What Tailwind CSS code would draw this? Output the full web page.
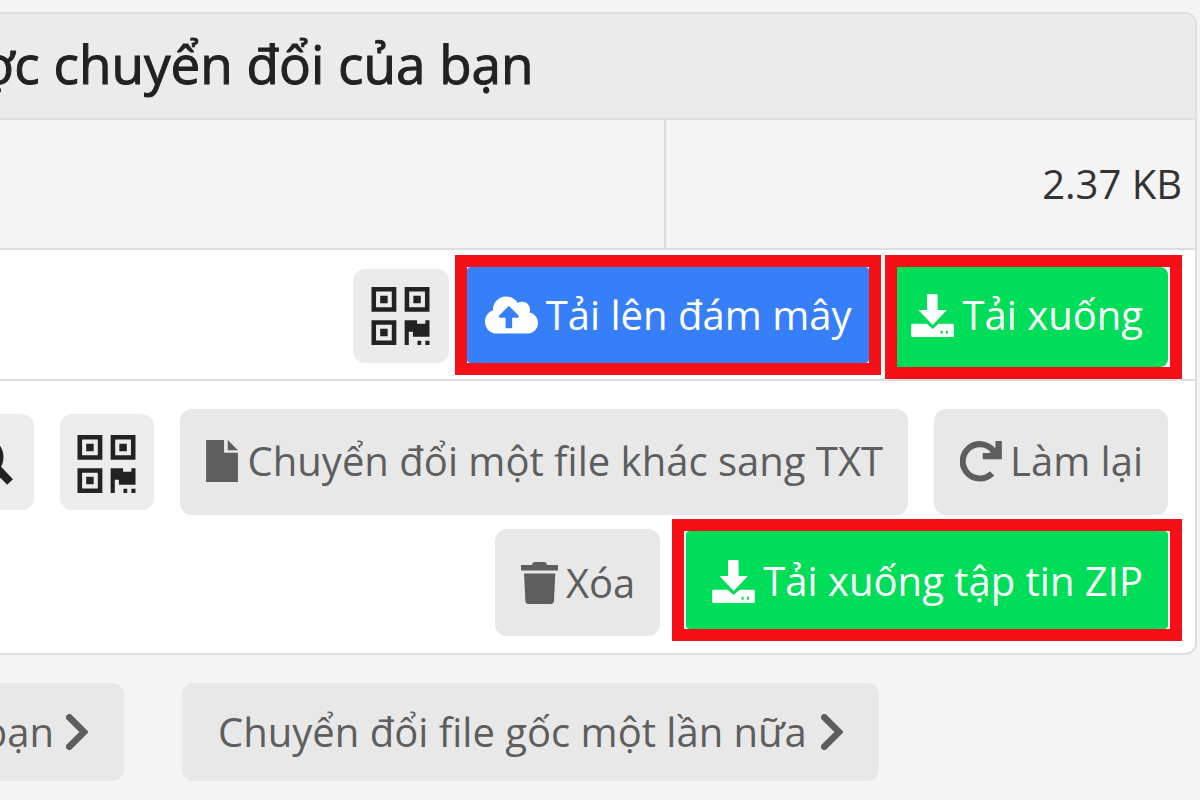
<!DOCTYPE html>
<html lang="vi">
<head>
    <meta charset="UTF-8">
    <meta name="viewport" content="width=device-width, initial-scale=1.0">
    <title>File được chuyển đổi của bạn</title>
    <script src="https://cdn.jsdelivr.net/npm/@tailwindcss/browser@4"></script>
    <style>
        body {
            font-family: 'Open Sans', 'Noto Sans', sans-serif;
        }
    </style>
</head>
<body class="bg-[#f4f4f4] text-[40px] leading-[56px] overflow-x-hidden">
    <!-- Shared icons -->
    <svg class="hidden">
        <symbol id="qr" viewBox="0 0 14 14">
            <path fill-rule="evenodd" d="M0 0h6v6H0zM1.1 1.1v3.8h3.8V1.1zM2.1 2.1h1.8v1.8H2.1zM8 0h6v6H8zM9.1 1.1v3.8h3.8V1.1zM10.1 2.1h1.8v1.8h-1.8zM0 8h6v6H0zM1.1 9.1v3.8h3.8V9.1zM2.1 10.1h1.8v1.8H2.1z"/>
            <path d="M8 8h3v.9h2V8h1v4h-4v-1.2H9V14H8zM11.1 13h.9v1h-.9zM13 13h1v1h-1z"/>
        </symbol>
        <symbol id="download" viewBox="0 0 129 130">
            <path d="M52 0h24q4 0 4 4v44h28L65 94 22 48h26V4q0-4 4-4z"/>
            <path fill-rule="evenodd" d="M4 90h43l18 16 18-16h42q4 0 4 4v32q0 4-4 4H4q-4 0-4-4V94q0-4 4-4zM89 111v9h6v-9zM105 111v9h6v-9z"/>
        </symbol>
        <symbol id="chevron" viewBox="0 0 66 108">
            <path d="M10 10l44 44-44 44" fill="none" stroke="currentColor" stroke-width="20" stroke-linecap="round"/>
        </symbol>
    </svg>

    <!-- Converted files -->
    <main class="mt-3 mr-[3px] -ml-6 bg-white border-2 border-[#dedede] rounded-xl overflow-hidden">
        <table class="w-full">
            <thead>
                <tr class="bg-[#ebebeb] border-b-2 border-[#dedede]">
                    <th colspan="2" class="h-[105px] p-0 pb-1 pl-1 text-left text-[53px] font-normal [-webkit-text-stroke:1px_#222] text-[#222]">ợc chuyển đổi của bạn</th>
                </tr>
            </thead>
            <tbody>
                <tr class="bg-[#f4f4f4] border-b-2 border-[#dedede]">
                    <td></td>
                    <td class="w-[530px] h-[130px] border-l-2 border-[#dedede] pr-[13px] text-right text-[#333]">2.37 KB</td>
                </tr>
                <tr class="border-b-2 border-[#dedede]">
                    <td colspan="2" class="h-[131px] p-0 pt-[5px] pr-[13px] align-top">
                        <div class="flex justify-end items-start gap-1">
                            <button aria-label="Mã QR" class="flex items-center justify-center mt-[14px] mr-[2px] w-24 h-[94px] rounded-xl bg-[#ebebeb] text-[#222]">
                                <svg class="w-[59px] h-[58px] fill-current"><use href="#qr"/></svg>
                            </button>
                            <div class="border-12 border-[#f51017]">
                                <button class="flex items-center gap-2 h-24 px-[18px] rounded bg-[#377ff8] text-white">
                                    <svg class="w-[53px] h-[38px]" viewBox="0 32 640 448" fill="currentColor">
                                        <path d="M537.6 226.6c4.1-10.7 6.4-22.4 6.4-34.6 0-53-43-96-96-96-19.7 0-38.1 6-53.3 16.2C367 64.2 315.3 32 256 32c-88.4 0-160 71.6-160 160 0 2.7.1 5.4.2 8.1C40.2 219.8 0 273.2 0 336c0 79.5 64.5 144 144 144h368c70.7 0 128-57.3 128-128 0-61.9-44-113.6-102.4-125.4zM393.4 288H328v112c0 8.8-7.2 16-16 16h-48c-8.8 0-16-7.2-16-16V288h-65.4c-14.3 0-21.4-17.2-11.3-27.4l105.4-105.4c6.2-6.2 16.4-6.2 22.6 0l105.4 105.4c10.1 10.1 2.9 27.4-11.3 27.4z"/>
                                    </svg>
                                    Tải lên đám mây
                                </button>
                            </div>
                            <div class="border-12 border-[#f51017] pr-[2px]">
                                <button class="flex items-center gap-2 h-[100px] pb-1 pl-[14px] pr-[25px] rounded-r-lg bg-[#00dd59] text-white">
                                    <svg class="w-[43px] h-[43px] fill-current"><use href="#download"/></svg>
                                    Tải xuống
                                </button>
                            </div>
                        </div>
                    </td>
                </tr>
            </tbody>
            <tfoot>
                <tr>
                    <td colspan="2" class="p-0 pt-7 pb-3 pr-[13px]">
                        <div class="flex justify-end items-center gap-[26px] pr-[14px]">
                            <button aria-label="Xem" class="flex shrink-0 items-center justify-center w-[94px] h-24 rounded-xl bg-[#ececec] text-[#222]">
                                <svg class="w-[52px] h-[48px]" viewBox="0 0 52 48" fill="none" stroke="currentColor">
                                    <circle cx="23" cy="19" r="16" stroke-width="7"/>
                                    <path d="M35 29l14 15" stroke-width="8"/>
                                </svg>
                            </button>
                            <button aria-label="Mã QR" class="flex shrink-0 items-center justify-center w-[94px] h-24 pt-1 rounded-xl bg-[#ececec] text-[#222]">
                                <svg class="w-[59px] h-[58px] fill-current"><use href="#qr"/></svg>
                            </button>
                            <button class="flex shrink-0 items-center gap-[10px] h-[106px] pb-[2px] pl-[26px] pr-[25px] rounded-xl bg-[#e8e8e8] text-[#5e5e5e]">
                                <svg class="w-8 h-[42px]" viewBox="0 0 94 124" fill="currentColor">
                                    <path d="M0 0h53v38h41v86H0zM64 0l30 30H64z"/>
                                </svg>
                                Chuyển đổi một file khác sang TXT
                            </button>
                            <button class="flex shrink-0 items-center gap-2 h-[106px] pb-[2px] pl-[26px] pr-[25px] rounded-xl bg-[#e8e8e8] text-[#5e5e5e]">
                                <svg class="w-[42px] h-[41px]" viewBox="0 0 124 122" fill="currentColor">
                                    <path d="M95 96A51 51 0 1 1 98 28" fill="none" stroke="currentColor" stroke-width="18"/>
                                    <path d="M105 0h19v54H67V36h20l18-17z"/>
                                </svg>
                                Làm lại
                            </button>
                        </div>
                        <div class="flex justify-end items-end gap-3 mt-1">
                            <button class="flex items-center gap-2 h-[107px] mb-[5px] pl-[26px] pr-[25px] rounded-xl bg-[#e8e8e8] text-[#5e5e5e]">
                                <svg class="w-[37px] h-[42px]" viewBox="0 0 110 125" fill="currentColor">
                                    <path d="M33 9q0-9 9-9h26q9 0 9 9h33v16H0V9zM9 34h93l-4 83q-1 8-9 8H22q-8 0-9-8z"/>
                                </svg>
                                Xóa
                            </button>
                            <div class="border-12 border-[#f51017] px-[2px]">
                                <button class="flex items-center gap-2 h-[98px] pt-[2px] pl-[26px] pr-[25px] rounded bg-[#00dd59] text-white">
                                    <svg class="w-[43px] h-[43px] fill-current"><use href="#download"/></svg>
                                    Tải xuống tập tin ZIP
                                </button>
                            </div>
                        </div>
                    </td>
                </tr>
            </tfoot>
        </table>
    </main>

    <!-- Next steps -->
    <nav class="flex gap-[58px] mt-7 -ml-6">
        <a href="#" class="flex shrink-0 items-center justify-end gap-3 w-[148px] h-[98px] pr-9 rounded-xl bg-[#e8e8e8] text-[#5e5e5e]">
            bạn
            <svg class="shrink-0 w-[22px] h-9"><use href="#chevron"/></svg>
        </a>
        <a href="#" class="flex shrink-0 items-center gap-[14px] h-[98px] px-9 rounded-xl bg-[#e8e8e8] text-[#5e5e5e]">
            Chuyển đổi file gốc một lần nữa
            <svg class="shrink-0 w-[22px] h-9"><use href="#chevron"/></svg>
        </a>
    </nav>
</body>
</html>
